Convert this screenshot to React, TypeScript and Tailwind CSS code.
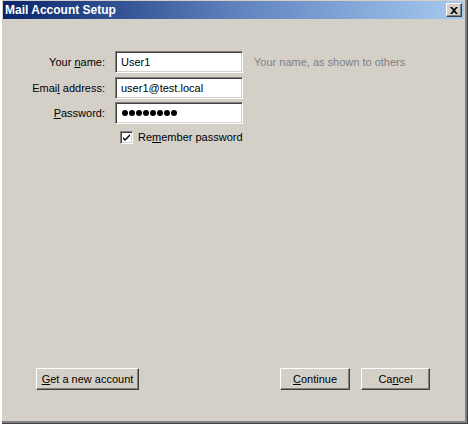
import React from "react";

const font = { fontFamily: '"Liberation Sans", Arial, sans-serif' };

// classic sunken text box
const sunken =
  "bg-white border border-t-[#808080] border-l-[#808080] border-b-white border-r-white shadow-[inset_1px_1px_0_#404040,inset_-1px_-1px_0_#d4d0c8]";

// classic raised push button
const raised =
  "bg-[#d4d0c8] text-[11px] text-black flex items-center justify-center h-[22px] border border-t-white border-l-white border-b-[#404040] border-r-[#404040] shadow-[inset_-1px_-1px_0_#808080]";

function Field({
  label,
  children,
}: {
  label: React.ReactNode;
  children: React.ReactNode;
}) {
  return (
    <div className="flex items-center">
      <div className="w-[102px] text-right text-[11px] text-black">{label}</div>
      <div className={`ml-[10px] w-[128px] h-[22px] flex items-center px-[5px] text-[11px] text-black ${sunken}`}>
        {children}
      </div>
    </div>
  );
}

export default function App() {
  return (
    <div
      style={font}
      className="w-[468px] h-[424px] bg-[#d4d0c8] flex flex-col pl-[3px] pt-[1px] pr-[4px] pb-[4px] shadow-[inset_2px_0_0_#ffffff,inset_-1px_-1px_0_#404040,inset_-3px_-3px_0_#808080]"
    >
      {/* Title bar */}
      <div className="h-[18px] bg-gradient-to-r from-[#0a246a] via-[#5f82bd] to-[#a6caf0] flex items-center justify-between pl-[2px] pr-[2px]">
        <span className="text-white font-bold text-[12px]">Mail Account Setup</span>
        <div className="w-[16px] h-[14px] bg-[#d4d0c8] border border-t-white border-l-white border-b-[#404040] border-r-[#404040] shadow-[inset_-1px_-1px_0_#808080] flex items-center justify-center">
          <svg width="8" height="7" viewBox="0 0 8 7">
            <path d="M0 0h2l2 2 2-2h2L5 3.5 8 7H6L4 5 2 7H0l3-3.5z" fill="#000" />
          </svg>
        </div>
      </div>

      {/* Body */}
      <div className="flex-1 flex flex-col pt-[32px] pb-[30px]">
        <div className="flex items-center">
          <Field label={<>Your <u>n</u>ame:</>}>User1</Field>
          <span className="ml-[11px] text-[11px] text-[#808080]">Your name, as shown to others</span>
        </div>
        <div className="mt-[4px]">
          <Field label={<>Emai<u>l</u> address:</>}>user1@test.local</Field>
        </div>
        <div className="mt-[3px]">
          <Field label={<><u>P</u>assword:</>}>
            <div className="flex gap-[1px] pl-[1px]" aria-label="password">
              {Array.from({ length: 8 }, (_, i) => (
                <span key={i} className="w-[6px] h-[6px] rounded-full bg-black" />
              ))}
            </div>
          </Field>
        </div>
        <div className="flex items-center mt-[5px] ml-[117px]">
          <div className={`w-[13px] h-[13px] flex items-center justify-center ${sunken}`}>
            <svg width="7" height="7" viewBox="0 0 7 7">
              <path d="M0 2l2 2 5-5v2L2 6 0 4z" fill="#000" transform="translate(0 1)" />
            </svg>
          </div>
          <span className="ml-[5px] text-[11px] text-black">
            Re<u>m</u>ember password
          </span>
        </div>

        <div className="mt-auto flex items-center pl-[33px] pr-[34px]">
          <button className={`${raised} w-[103px]`}>
            <u>G</u>et a new account
          </button>
          <button className={`${raised} w-[70px] ml-auto`}>
            <u>C</u>ontinue
          </button>
          <button className={`${raised} w-[69px] ml-[11px]`}>
            Ca<u>n</u>cel
          </button>
        </div>
      </div>
    </div>
  );
}
